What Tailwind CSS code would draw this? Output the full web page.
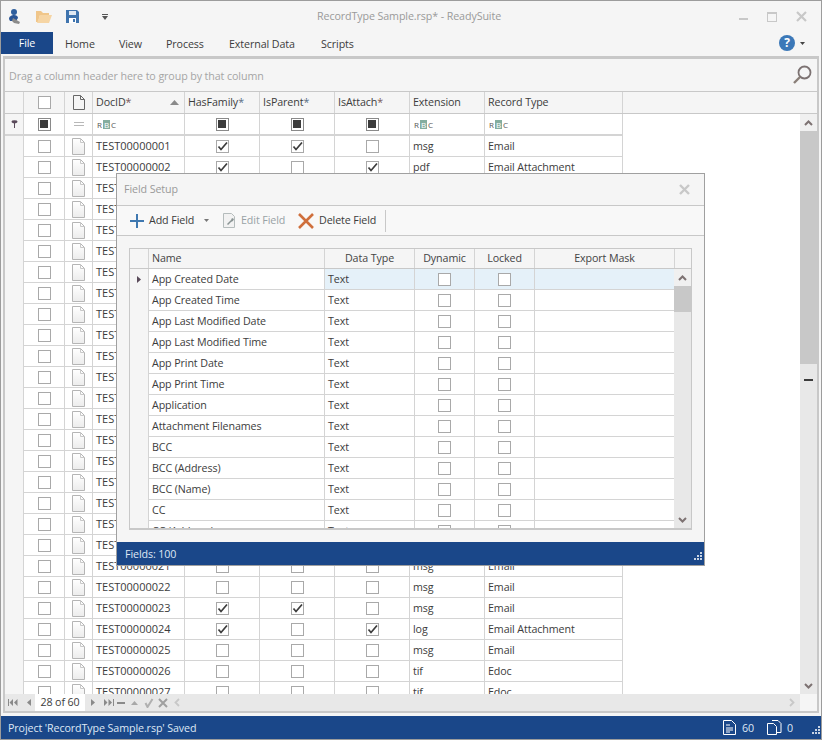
<!DOCTYPE html>
<html lang="en">
<head>
    <meta charset="UTF-8">
    <title>RecordType Sample.rsp* - ReadySuite</title>
    <script src="https://cdn.jsdelivr.net/npm/@tailwindcss/browser@4"></script>
</head>
<body class="bg-white overflow-hidden">
<div class="relative w-[822px] h-[740px] flex flex-col bg-[#f5f5f5] border border-[#9c9c9c] font-['Open_Sans',sans-serif] text-[10.7px] tracking-[-0.1px] leading-[16px] whitespace-nowrap text-[#3c3c3c] overflow-hidden">

    <!-- title bar -->
    <div class="relative h-[31px] shrink-0 flex items-center">
        <div class="flex items-center pl-[7px]">
            <svg width="14" height="17" viewBox="0 0 14 17"><circle cx="6" cy="4" r="3" fill="#2f5f9e"/><path d="M1 11c0-3 3-4 5-4s4 1 4 3l-2 3H2z" fill="#2a5596"/><path d="M5 10l7 4-1 2-5-1-2-2z" fill="#8b8b8b"/></svg>
            <svg class="ml-[14px]" width="16" height="13" viewBox="0 0 16 13"><path d="M0 1h5l2 2h6v2H4L2 12H0z" fill="#f0c68a"/><path d="M4 5h12l-3 8H1z" fill="#f6d5a4"/></svg>
            <svg class="ml-[14px]" width="13" height="13" viewBox="0 0 13 13"><path d="M0 0h11l2 2v11H0z" fill="#3f74ae"/><path d="M3 1h7v4H3z" fill="#dfe9f3"/><path d="M3 8h7v5H3z" fill="#fff"/><path d="M7 9h2v3H7z" fill="#3f74ae"/></svg>
            <svg class="ml-[23px]" width="6" height="6" viewBox="0 0 6 6"><path d="M0 0h6v1H0zM0 2h6L3 6z" fill="#555"/></svg>
        </div>
        <span class="absolute left-[316px] top-[7px] text-[#9a9a9a]">RecordType Sample.rsp* - ReadySuite</span>
        <div class="ml-auto flex items-center gap-[19px] pr-[14px]">
            <span class="block w-[9px] h-[2px] mt-[4px] bg-[#c8c8c8]"></span>
            <span class="block w-[10px] h-[10px] border border-t-2 border-[#c8c8c8]"></span>
            <svg width="11" height="11" viewBox="0 0 11 11"><path d="M1 1l9 9M10 1l-9 9" stroke="#c8c8c8" stroke-width="2.2" fill="none"/></svg>
        </div>
    </div>

    <!-- ribbon tabs -->
    <div class="h-[24px] shrink-0 flex items-stretch pr-[16px]">
        <div class="w-[52px] h-[22px] bg-[#1a4789] text-white flex items-center justify-center">File</div>
        <div class="flex items-center pl-[12px] h-[22px] pt-[2px]">
            <span class="w-[54px]">Home</span><span class="w-[47px]">View</span><span class="w-[63px]">Process</span><span class="w-[92px]">External Data</span><span>Scripts</span>
        </div>
        <div class="ml-auto flex items-center gap-[5px] h-[22px]">
            <span class="w-[16px] h-[16px] rounded-full bg-[#3b78b8] text-white font-bold text-[12px] leading-[16px] text-center">?</span>
            <svg width="5" height="3" viewBox="0 0 5 3"><path d="M0 0h5L2.500 3z" fill="#444"/></svg>
        </div>
    </div>

    <!-- main panel -->
    <div class="flex-1 min-h-0 mx-[2px] mb-[3px] flex flex-col border-x-2 border-b-2 border-t-[3px] border-[#c8c8c8] bg-white">
        <div class="h-[33px] shrink-0 bg-[#f5f5f5] border-b border-[#c8c8c8] flex items-center pl-[4px] pr-[5px] text-[#a5a5a5]">
            <span class="mt-[1px]">Drag a column header here to group by that column</span>
            <svg class="ml-auto" width="20" height="20" viewBox="0 0 20 20"><circle cx="12.500" cy="7.500" r="6" fill="none" stroke="#7c7272" stroke-width="1.800"/><path d="M8 12l-6 6" stroke="#8a7f78" stroke-width="2.400"/></svg>
        </div>

        <div id="mainHead" class="h-[22px] shrink-0 flex bg-[#f5f5f5] border-b border-[#c8c8c8]"></div>

        <div class="flex-1 min-h-0 flex">
            <div id="mainRows" class="flex-1 min-w-0 overflow-hidden bg-white"></div>
            <div class="w-[17px] shrink-0 flex flex-col bg-[#e8e8e8]">
                <div class="h-[17px] shrink-0 bg-[#f0f0f0] flex items-center justify-center">
                    <svg width="9" height="6" viewBox="0 0 9 6"><path d="M1 5l3.500-3.500L8 5" fill="none" stroke="#7d7272" stroke-width="2"/></svg>
                </div>
                <div class="h-[233px] shrink-0 bg-[#c8c8c8]"></div>
                <div class="h-[15px] shrink-0"></div>
                <div class="h-[2px] w-[9px] ml-[4px] shrink-0 bg-[#3c3c3c]"></div>
                <div class="flex-1"></div>
                <div class="h-[17px] shrink-0 flex items-center justify-center">
                    <svg width="9" height="6" viewBox="0 0 9 6"><path d="M1 1l3.500 3.500L8 1" fill="none" stroke="#7d7272" stroke-width="2"/></svg>
                </div>
            </div>
        </div>

        <!-- record navigator -->
        <div class="h-[17px] shrink-0 flex items-center bg-[#e8e8e8]">
            <svg class="ml-[3px]" width="10" height="7" viewBox="0 0 10 7"><path d="M0 0h1v7H0zM5 0v7L1.500 3.500zM9.500 0v7L6 3.500z" fill="#8a8a8a"/></svg>
            <svg class="ml-[9px]" width="4" height="7" viewBox="0 0 4 7"><path d="M4 0v7L0 3.500z" fill="#8a8a8a"/></svg>
            <div class="ml-[4px] w-[50px] h-[17px] bg-white text-center leading-[17px]">28 of 60</div>
            <svg class="ml-[6px]" width="4" height="7" viewBox="0 0 4 7"><path d="M0 0v7l4-3.500z" fill="#8a8a8a"/></svg>
            <svg class="ml-[9px]" width="10" height="7" viewBox="0 0 10 7"><path d="M9 0h1v7H9zM0 0v7l3.500-3.500zM4.500 0v7L8 3.500z" fill="#8a8a8a"/></svg>
            <span class="ml-[3px] block w-[8px] h-[2px] bg-[#8a8a8a]"></span>
            <svg class="ml-[6px]" width="7" height="4" viewBox="0 0 7 4"><path d="M0 4h7L3.500 0z" fill="#a8a8a8"/></svg>
            <svg class="ml-[6px]" width="10" height="10" viewBox="0 0 10 10"><path d="M1.500 5l2 4L8.500 1" fill="none" stroke="#b0b0b0" stroke-width="2"/></svg>
            <svg class="ml-[4px]" width="10" height="10" viewBox="0 0 10 10"><path d="M1 1l8 8M9 1l-8 8" fill="none" stroke="#a0a0a0" stroke-width="2"/></svg>
            <svg class="ml-[6px]" width="6" height="9" viewBox="0 0 6 9"><path d="M5 1L1.500 4.500 5 8" fill="none" stroke="#c8c8c8" stroke-width="1.800"/></svg>
            <svg class="ml-auto mr-[5px]" width="6" height="9" viewBox="0 0 6 9"><path d="M1 1l3.500 3.500L1 8" fill="none" stroke="#c8c8c8" stroke-width="1.800"/></svg>
            <div class="w-[17px] h-[17px] shrink-0 bg-[#f5f5f5]"></div>
        </div>
    </div>

    <!-- status bar -->
    <div class="h-[23px] shrink-0 bg-[#1a4789] text-[#dfe8f5] flex items-center pl-[7px]">
        <span class="mt-[1px]">Project 'RecordType Sample.rsp' Saved</span>
        <div class="ml-auto flex items-center">
            <svg width="13" height="15" viewBox="0 0 13 15"><path d="M.5.500h8l4 4v10H.5zM3 5h4M3 8h7M3 10h7M3 12h4" fill="none" stroke="#fff"/></svg>
            <span class="ml-[6px] w-[18px]">60</span>
            <svg class="ml-[7px]" width="15" height="15" viewBox="0 0 15 15"><path d="M.5 3.500h6l3 3v8H.5zM5 .500h6l3 3v9h-4" fill="none" stroke="#fff"/></svg>
            <span class="ml-[5px] w-[24px]">0</span>
            <svg width="9" height="9" class="mr-[1px] mt-[6px]" viewBox="0 0 9 9"><path d="M7 0h2v2H7zM4 3h2v2H4zM7 3h2v2H7zM1 6h2v2H1zM4 6h2v2H4zM7 6h2v2H7z" fill="#c8d3e3"/></svg>
        </div>
    </div>

    <!-- Field Setup dialog -->
    <div class="absolute left-[115px] top-[172px] w-[589px] h-[393px] flex flex-col bg-[#f5f5f5] border border-[#a0a0a0]">
        <div class="h-[32px] shrink-0 flex items-center pl-[7px] pr-[14px] border-b border-[#c8c8c8] text-[#9a9a9a]">
            <span class="-mt-[1px]">Field Setup</span>
            <svg class="ml-auto" width="11" height="11" viewBox="0 0 11 11"><path d="M1 1l9 9M10 1l-9 9" stroke="#c8c8c8" stroke-width="2.400" fill="none"/></svg>
        </div>
        <div class="h-[30px] shrink-0 flex items-center bg-[#f8f8f8] border-b border-[#c8c8c8]">
            <svg class="ml-[13px]" width="14" height="14" viewBox="0 0 14 14"><path d="M7 0v14M0 7h14" stroke="#3f78b0" stroke-width="2"/></svg>
            <span class="ml-[5px] w-[44px] mb-[1px]">Add Field</span>
            <svg class="ml-[11px]" width="5" height="3" viewBox="0 0 5 3"><path d="M0 0h5L2.500 3z" fill="#777"/></svg>
            <svg class="ml-[14px]" width="13" height="15" viewBox="0 0 13 15"><path d="M.5.500h8l3 3v11H.5z" fill="#f2f2f2" stroke="#b5bcbc"/><path d="M4 11l4-4 1-2 2 1-1 2-2 1-3 3z" fill="#8a9494"/></svg>
            <span class="ml-[5px] w-[43px] mb-[1px] text-[#98a2a6]">Edit Field</span>
            <svg class="ml-[14px]" width="16" height="16" viewBox="0 0 16 16"><path d="M1 1l14 14M15 1L1 15" stroke="#cf6f3c" stroke-width="2.600" fill="none"/></svg>
            <span class="ml-[5px] w-[56px] mb-[1px]">Delete Field</span>
            <span class="ml-[10px] block w-px h-[22px] bg-[#c8c8c8]"></span>
        </div>
        <div class="flex-1 min-h-0 p-[12px]">
            <div class="h-full flex flex-col border-x border-b-2 border-[#c8c8c8] bg-white overflow-hidden">
                <div id="fieldHead" class="h-[21px] shrink-0 flex bg-[#f5f5f5] border-y border-[#c8c8c8] text-[#444]"></div>
                <div class="flex-1 min-h-0 flex">
                    <div id="fieldRows" class="flex-1 min-w-0 overflow-hidden"></div>
                    <div class="w-[17px] shrink-0 flex flex-col bg-[#e8e8e8]">
                        <div class="h-[17px] shrink-0 bg-[#f0f0f0] flex items-center justify-center">
                            <svg width="9" height="6" viewBox="0 0 9 6"><path d="M1 5l3.500-3.500L8 5" fill="none" stroke="#7d7272" stroke-width="2"/></svg>
                        </div>
                        <div class="h-[26px] shrink-0 bg-[#c8c8c8]"></div>
                        <div class="flex-1"></div>
                        <div class="h-[17px] shrink-0 flex items-center justify-center">
                            <svg width="9" height="6" viewBox="0 0 9 6"><path d="M1 1l3.500 3.500L8 1" fill="none" stroke="#7d7272" stroke-width="2"/></svg>
                        </div>
                    </div>
                </div>
            </div>
        </div>
        <div class="h-[23px] shrink-0 bg-[#1a4789] text-[#dfe8f5] flex items-center pl-[8px] pr-[2px]">
            <span>Fields: 100</span>
            <svg class="ml-auto mt-[6px]" width="9" height="9" viewBox="0 0 9 9"><path d="M7 0h2v2H7zM4 3h2v2H4zM7 3h2v2H7zM1 6h2v2H1zM4 6h2v2H4zM7 6h2v2H7z" fill="#c8d3e3"/></svg>
        </div>
    </div>
</div>

<script>
    const CHECK = '<svg width="11" height="11" viewBox="0 0 11 11"><path d="M1.500 5.500l2.500 3L10 1.500" fill="none" stroke="#3c3c3c" stroke-width="1.700"/></svg>';

    function checkbox(state) {
        const inner = state === 'mixed' ? '<span class="block w-[8px] h-[8px] bg-[#3c3c3c]"></span>' : state ? CHECK : '';
        const edge = state === 'mixed' ? 'border-[#8a8a8a]' : 'border-[#a9a9a9]';
        return `<span class="w-[13px] h-[13px] flex items-center justify-center bg-white border ${edge}">${inner}</span>`;
    }

    const abc = '<span class="flex items-center h-[9px] text-[8px] leading-[9px] tracking-normal font-[\'Liberation_Mono\',monospace] text-[#555]"><span class="px-[1px]">R</span><span class="px-[1px] bg-[#84ad9f] text-white">B</span><span class="px-[1px]">C</span></span>';
    const docIcon = '<svg width="13" height="17" viewBox="0 0 13 17"><defs><linearGradient id="pg" x1="0" y1="0" x2="0" y2="1"><stop offset="0" stop-color="#fff"/><stop offset="1" stop-color="#ececec"/></linearGradient></defs><path d="M.5.500h8l4 4v12H.5z" fill="url(#pg)" stroke="#b5b5b5"/><path d="M8.500.500v4h4" fill="none" stroke="#c8c8c8"/></svg>';
    const docHead = '<svg width="12" height="15" viewBox="0 0 12 15"><path d="M.5.500h7l4 4v10H.5zM7.500.500v4h4" fill="none" stroke="#666"/></svg>';
    const pin = '<svg width="7" height="8" viewBox="0 0 7 8"><path d="M.5 1.500a3 1.300 0 0 1 6 0 3 1.800 0 0 1-6 0z" fill="#5a4a5a"/><path d="M3 3h1v5H3z" fill="#5a4a5a"/></svg>';

    const mainWidths = ['w-[19px]', 'w-[41px]', 'w-[28px]', 'w-[92px]', 'w-[75px]', 'w-[75px]', 'w-[75px]', 'w-[75px]', 'w-[138px]'];

    function mainCell(i, content, extra) {
        return `<div class="${mainWidths[i]} shrink-0 flex items-center border-r border-[#d4d4d4] ${extra}">${content}</div>`;
    }

    function renderMainHead() {
        const titles = [
            ['', ''],
            [checkbox(false), 'justify-center'],
            [docHead, 'justify-center'],
            ['<span class="-mt-[1px]">DocID<span class="text-[#7a5a5a]">*</span></span><svg class="ml-auto mr-[5px]" width="9" height="5" viewBox="0 0 9 5"><path d="M0 5h9L4.500 0z" fill="#8a8a8a"/></svg>', 'pl-[3px]'],
            ['<span class="-mt-[1px]">HasFamily<span class="text-[#5a6f85]">*</span></span>', 'pl-[3px]'],
            ['<span class="-mt-[1px]">IsParent<span class="text-[#5a6f85]">*</span></span>', 'pl-[3px]'],
            ['<span class="-mt-[1px]">IsAttach<span class="text-[#7a5a5a]">*</span></span>', 'pl-[3px]'],
            ['<span class="-mt-[1px]">Extension</span>', 'pl-[3px]'],
            ['<span class="-mt-[1px]">Record Type</span>', 'pl-[3px]']
        ];
        document.getElementById('mainHead').innerHTML = titles.map((t, i) => mainCell(i, t[0], t[1])).join('');
    }

    function renderMainRows() {
        const rows = {
            1: [1, 1, 0, 'msg', 'Email'],
            2: [1, 0, 1, 'pdf', 'Email Attachment'],
            23: [1, 1, 0, 'msg', 'Email'],
            24: [1, 0, 1, 'log', 'Email Attachment'],
            26: [0, 0, 0, 'tif', 'Edoc'],
            27: [0, 0, 0, 'tif', 'Edoc']
        };
        let html = `<div class="h-[22px] flex"><div class="w-[19px] shrink-0 flex items-center justify-center bg-[#f5f5f5] border-r border-b-2 border-[#d4d4d4]">${pin}</div>`
            + mainCell(1, checkbox('mixed'), 'justify-center border-b-2')
            + mainCell(2, '<span class="block w-[10px] h-[4px] border-y border-[#b8b8b8]"></span>', 'justify-center border-b-2')
            + mainCell(3, abc, 'pl-[3px] border-b-2')
            + mainCell(4, checkbox('mixed'), 'justify-center border-b-2')
            + mainCell(5, checkbox('mixed'), 'justify-center border-b-2')
            + mainCell(6, checkbox('mixed'), 'justify-center border-b-2')
            + mainCell(7, abc, 'pl-[3px] border-b-2')
            + mainCell(8, abc, 'pl-[3px] border-b-2')
            + '</div>';

        for (let n = 1; n <= 27; n++) {
            // rows 3-20 sit behind the dialog past the DocID column
            const hidden = n >= 3 && n <= 20;
            const r = rows[n] || (hidden ? [0, 0, 0, '', ''] : [0, 0, 0, 'msg', 'Email']);
            const id = 'TEST' + String(n).padStart(8, '0');
            html += '<div class="h-[21px] flex">'
                + '<div class="w-[19px] shrink-0 bg-[#f5f5f5] border-r border-[#d4d4d4]"></div>'
                + mainCell(1, checkbox(false), 'justify-center border-b')
                + mainCell(2, docIcon, 'justify-center border-b')
                + mainCell(3, `<span class="text-[11px] tracking-normal">${id}</span>`, 'pl-[3px] border-b')
                + mainCell(4, checkbox(r[0]), 'justify-center border-b')
                + mainCell(5, checkbox(r[1]), 'justify-center border-b')
                + mainCell(6, checkbox(r[2]), 'justify-center border-b')
                + mainCell(7, r[3], 'pl-[3px] border-b')
                + mainCell(8, r[4], 'pl-[3px] border-b')
                + '</div>';
        }
        document.getElementById('mainRows').innerHTML = html;
    }

    const fieldWidths = ['w-[19px]', 'w-[176px]', 'w-[90px]', 'w-[60px]', 'w-[60px]', 'w-[140px]'];

    function fieldCell(i, content, extra) {
        return `<div class="${fieldWidths[i]} shrink-0 flex items-center border-r border-[#d4d4d4] ${extra}">${content}</div>`;
    }

    function renderFields() {
        const head = ['', 'Name', 'Data Type', 'Dynamic', 'Locked', 'Export Mask'];
        document.getElementById('fieldHead').innerHTML = head.map((t, i) => fieldCell(i, `<span class="-mt-[1px]">${t}</span>`, i === 1 ? 'pl-[3px]' : 'justify-center')).join('')
            + '<div class="flex-1"></div>';

        const names = ['App Created Date', 'App Created Time', 'App Last Modified Date', 'App Last Modified Time', 'App Print Date', 'App Print Time', 'Application', 'Attachment Filenames', 'BCC', 'BCC (Address)', 'BCC (Name)', 'CC', 'CC (Address)'];
        document.getElementById('fieldRows').innerHTML = names.map((name, n) => {
            const tint = n === 0 ? 'bg-[#e5f1f9]' : '';
            const arrow = n === 0 ? '<svg width="4" height="7" viewBox="0 0 4 7"><path d="M0 0v7l4-3.500z" fill="#5a4a5a"/></svg>' : '';
            return '<div class="h-[21px] flex">'
                + `<div class="w-[19px] shrink-0 flex items-center justify-center bg-[#f5f5f5] border-r border-[#d4d4d4]">${arrow}</div>`
                + fieldCell(1, name, 'pl-[3px] border-b')
                + fieldCell(2, 'Text', `pl-[3px] border-b ${tint}`)
                + fieldCell(3, checkbox(false), `justify-center border-b ${tint}`)
                + fieldCell(4, checkbox(false), `justify-center border-b ${tint}`)
                + fieldCell(5, '', `border-b ${tint}`)
                + '</div>';
        }).join('');
    }

    renderMainHead();
    renderMainRows();
    renderFields();
</script>
</body>
</html>
